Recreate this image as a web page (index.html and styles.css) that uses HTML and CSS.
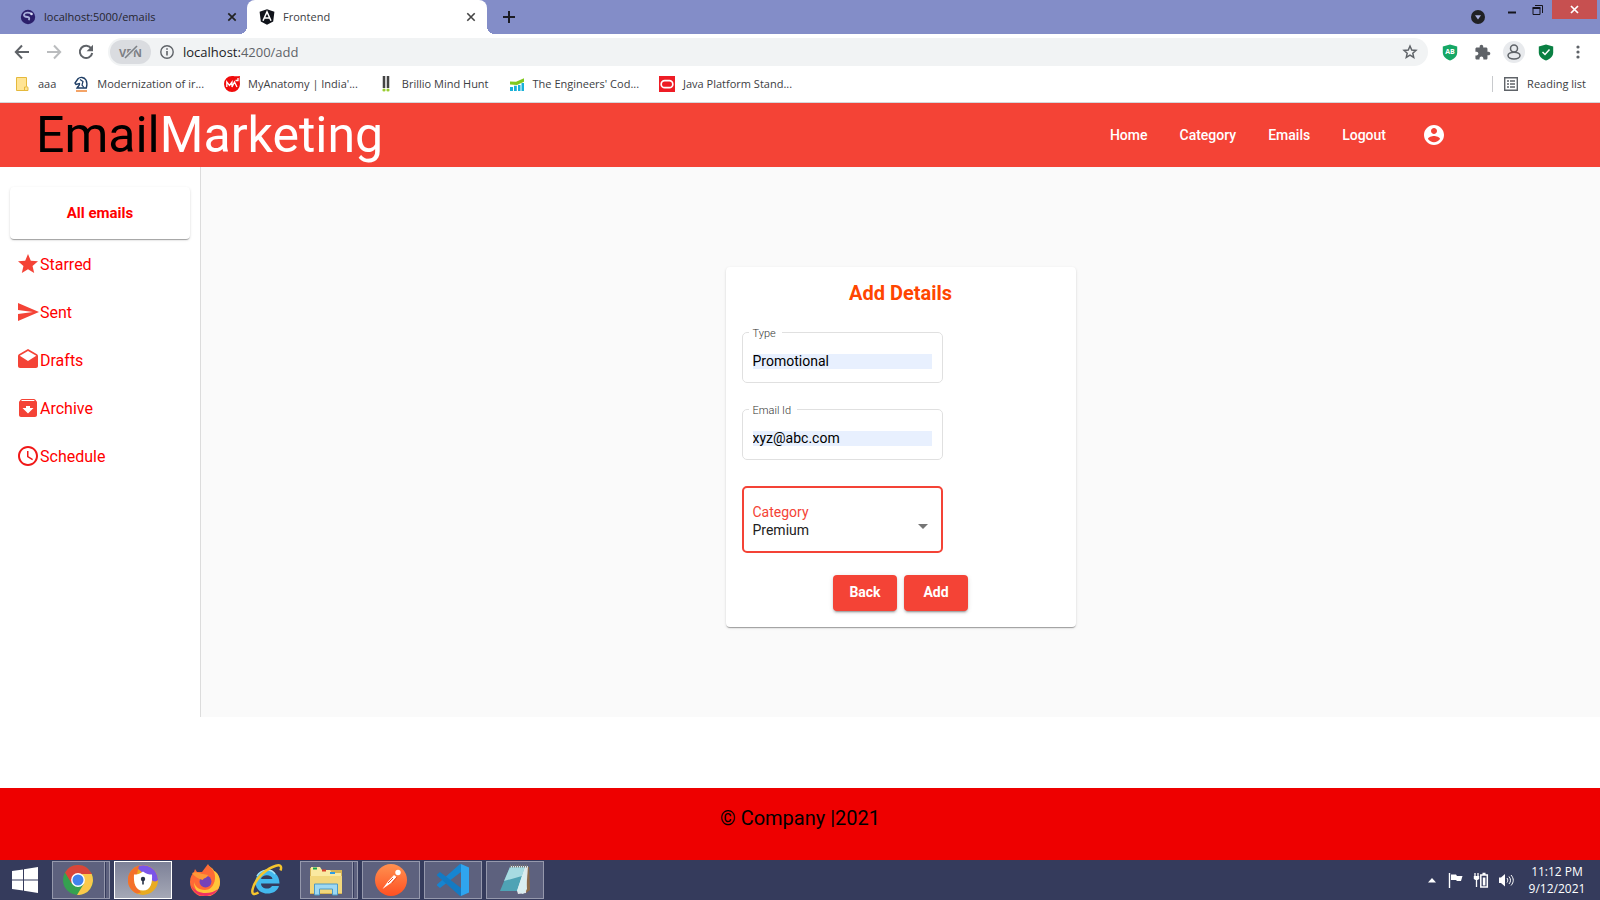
FILE: index.html
```html
<!DOCTYPE html>
<html lang="en">
<head>
<meta charset="utf-8">
<title>Frontend</title>
<link rel="stylesheet" href="styles.css">
</head>
<body>
<div class="tabs">
  <div class="tab">
    <svg class="fav" viewBox="0 0 16 16"><circle cx="8" cy="8" r="7.200" fill="#2b1f6b"/><path d="M11.500 4.500C9 3.500 5 3 4 5.500c-.5 2 1.500 2.300 3.500 2.500 1.800.3 2.500 1.500 1 3" fill="none" stroke="#a9b0dc" stroke-width="1.800"/><circle cx="11.500" cy="5" r="1.300" fill="#d8dcf3"/></svg>
    <span class="tab-title">localhost:5000/emails</span>
    <button class="icon-btn" aria-label="Close tab"><svg width="10" height="10" viewBox="0 0 10 10"><path d="M1.300 1.300l7.400 7.400M8.700 1.300L1.300 8.700" stroke="#222" stroke-width="1.700"/></svg></button>
  </div>
  <div class="tab tab-active">
    <svg class="fav" viewBox="0 0 16 16"><path d="M8 .2l7.400 2.600-1.200 9.600L8 15.800l-6.200-3.400L.6 2.800z" fill="#10131a"/><path d="M4 11.700L8 2.900l4 8.800M5.600 9h4.800" fill="none" stroke="#fff" stroke-width="1.500"/></svg>
    <span class="tab-title">Frontend</span>
    <button class="icon-btn" aria-label="Close tab"><svg width="10" height="10" viewBox="0 0 10 10"><path d="M1.300 1.300l7.400 7.400M8.700 1.300L1.300 8.700" stroke="#444" stroke-width="1.600"/></svg></button>
  </div>
  <button class="icon-btn new-tab" aria-label="New tab"><svg width="14" height="14" viewBox="0 0 14 14"><path d="M7 1v12M1 7h12" stroke="#1c1c24" stroke-width="2"/></svg></button>
  <div class="window-controls">
    <button class="icon-btn tab-search" aria-label="Search tabs"><svg width="14" height="14" viewBox="0 0 14 14"><circle cx="7" cy="7" r="7" fill="#202124"/><path d="M4 5.200h6L7 9.600z" fill="#a9b1df"/></svg></button>
    <button class="icon-btn win" aria-label="Minimize"><svg width="10" height="10" viewBox="0 0 10 10"><path d="M1 7.500h8" stroke="#15151d" stroke-width="2"/></svg></button>
    <button class="icon-btn win" aria-label="Restore"><svg width="12" height="12" viewBox="0 0 12 12"><path d="M1 4.500h7v6H1z M3 1.500h7.500V9" fill="none" stroke="#15151d"/><path d="M.5 4h8" stroke="#15151d" stroke-width="2"/></svg></button>
    <button class="icon-btn win-close" aria-label="Close"><svg width="9" height="9" viewBox="0 0 9 9"><path d="M1 1l7 7M8 1L1 8" stroke="#fff" stroke-width="1.700"/></svg></button>
  </div>
</div>

<div class="toolbar">
  <button class="icon-btn tool" aria-label="Back"><svg width="16" height="16" viewBox="0 0 16 16"><path d="M15 8H2M8 1.500L1.800 8 8 14.500" fill="none" stroke="#5f6368" stroke-width="2"/></svg></button>
  <button class="icon-btn tool" aria-label="Forward"><svg width="16" height="16" viewBox="0 0 16 16"><path d="M1 8h13M8 1.500L14.200 8 8 14.500" fill="none" stroke="#babcbe" stroke-width="2"/></svg></button>
  <button class="icon-btn tool" aria-label="Reload"><svg width="16" height="16" viewBox="0 0 16 16"><path d="M13.300 4.500A6.200 6.200 0 1 0 14.200 9" fill="none" stroke="#5f6368" stroke-width="2"/><path d="M15 .8v6.400H8.600z" fill="#5f6368"/></svg></button>
  <div class="omnibox">
    <button class="vpn" aria-label="VPN off"><span>VPN</span><svg width="24" height="14" viewBox="0 0 24 14"><path d="M7 13L19 1" stroke="#dadce0" stroke-width="3.500"/><path d="M7 13L19 1" stroke="#7d8085" stroke-width="1.600"/></svg></button>
    <svg class="info" width="14" height="14" viewBox="0 0 14 14"><circle cx="7" cy="7" r="6.200" fill="none" stroke="#5f6368" stroke-width="1.400"/><path d="M7 6v4.500M7 3.300v1.500" stroke="#5f6368" stroke-width="1.600"/></svg>
    <span class="url">localhost:<span class="url-path">4200/add</span></span>
    <button class="icon-btn bookmark-star" aria-label="Bookmark this page"><svg width="16" height="16" viewBox="0 0 24 24"><path d="M12 3l2.600 6 6.400.6-4.800 4.200 1.400 6.400L12 16.800l-5.600 3.400 1.400-6.400L3 9.600 9.400 9z" fill="none" stroke="#5f6368" stroke-width="2.200"/></svg></button>
  </div>
  <div class="extensions">
    <button class="icon-btn" aria-label="Ad blocker"><svg width="16" height="17" viewBox="0 0 16 17"><path d="M8 .4l7.200 2v6c0 4-3.500 6.600-7.200 8.200C4.300 15 .8 12.400.8 8.400v-6z" fill="#16a765"/><text x="8" y="10" text-anchor="middle" class="ab">AB</text></svg></button>
    <button class="icon-btn" aria-label="Extensions"><svg width="17" height="17" viewBox="0 0 24 24"><path fill="#5f6368" d="M20.500 11H19V7c0-1.100-.9-2-2-2h-4V3.500C13 2.120 11.880 1 10.500 1S8 2.120 8 3.500V5H4c-1.100 0-1.990.9-1.990 2v3.800H3.500c1.490 0 2.700 1.210 2.700 2.700s-1.210 2.700-2.700 2.700H2V20c0 1.100.9 2 2 2h3.800v-1.500c0-1.490 1.210-2.700 2.700-2.700s2.700 1.210 2.700 2.700V22H17c1.100 0 2-.9 2-2v-4h1.500c1.380 0 2.500-1.120 2.500-2.500S21.880 11 20.500 11z"/></svg></button>
    <button class="icon-btn profile" aria-label="Profile"><svg width="16" height="16" viewBox="0 0 16 16"><circle cx="8" cy="4.600" r="3.500" fill="none" stroke="#5f6368" stroke-width="1.500"/><ellipse cx="8" cy="11.600" rx="6" ry="3.400" fill="none" stroke="#5f6368" stroke-width="1.500"/></svg></button>
    <button class="icon-btn" aria-label="Security"><svg width="16" height="17" viewBox="0 0 16 17"><path d="M8 .4l7.200 2v6c0 4-3.500 6.600-7.200 8.200C4.300 15 .8 12.400.8 8.400v-6z" fill="#0a8043"/><path d="M4.500 8l2.500 2.500 4.500-5" fill="none" stroke="#fff" stroke-width="1.500"/></svg></button>
    <button class="icon-btn" aria-label="Menu"><svg width="4" height="14" viewBox="0 0 4 14" fill="#5f6368"><circle cx="2" cy="2" r="1.600"/><circle cx="2" cy="7" r="1.600"/><circle cx="2" cy="12" r="1.600"/></svg></button>
  </div>
</div>

<div class="bookmarks">
  <a href="#"><svg class="fav" viewBox="0 0 16 16"><path d="M2.500 1.500h10v9l1.500.8v3.200h-11.500z" fill="#ffe494" stroke="#e5b93c"/><path d="M10.500 14v-3h2" fill="none" stroke="#e5b93c"/></svg>aaa</a>
  <a href="#"><svg class="fav" viewBox="0 0 16 16"><path d="M4 12c1-2 3-2.500 2.500-4.500L3 8.500 2 7l3-4.200C7 .8 11 .8 13 4c1.200 2.500 1 5.500.3 8z" fill="none" stroke="#1d3c64" stroke-width="1.400"/><path d="M7 3.500l3 2-1 3.500 2 2.500" fill="none" stroke="#1d3c64" stroke-width="1.200"/><path d="M3 15h11" stroke="#ef7d26" stroke-width="1.400"/></svg>Modernization of ir...</a>
  <a href="#"><svg class="fav" viewBox="0 0 16 16"><path d="M8 0c3 0 3.500.6 8 0-.6 4 0 5 0 8a8 8 0 1 1-8-8z" fill="#f00b0b"/><path d="M2.800 11V6l2.700 3.500L8 6v5l2.500-5 2.500 5M11.500 4.500h3M14 2v3" fill="none" stroke="#fff" stroke-width="1.300"/></svg>MyAnatomy | India'...</a>
  <a href="#"><svg class="fav" viewBox="0 0 16 16"><path d="M4.500 0h3v12h-3zM8.500 0h3v12h-3z" fill="#9b9b9b"/><path d="M5 0h2v12H5zM9 0h2v12H9z" fill="#444"/><circle cx="6" cy="14" r="1.600" fill="#9acd32"/><circle cx="10" cy="14" r="1.600" fill="#9acd32"/></svg>Brillio Mind Hunt</a>
  <a href="#"><svg class="fav" viewBox="0 0 16 16"><path d="M1 5.500l6 .2 8-3.500v3.500L8 9l-7-.5z" fill="#80c91e"/><path d="M1 11h3v4H1zM5 9.800h2.800V15H5zM9 9h2.500v6H9zM12.500 7H15v8h-2.500z" fill="#18b1d8"/></svg>The Engineers' Cod...</a>
  <a href="#"><svg class="fav" viewBox="0 0 16 16"><path d="M0 0h16v16H0z" fill="#ee1c25"/><rect x="2.200" y="4.700" width="11.600" height="7" rx="3.500" fill="none" stroke="#fff" stroke-width="1.700"/></svg>Java Platform Stand...</a>
  <button class="reading"><svg class="fav" viewBox="0 0 16 16"><path d="M1.700 1.700h12.600v12.600H1.700z" fill="none" stroke="#5f6368" stroke-width="1.400"/><path d="M4 5h2M7 5h5M4 8h2M7 8h5M4 11h2M7 11h5" stroke="#5f6368" stroke-width="1.500"/></svg>Reading list</button>
</div>

<header class="header">
  <h1 class="brand"><span class="brand-first">Email</span>Marketing</h1>
  <nav class="nav">
    <a href="#">Home</a><a href="#">Category</a><a href="#">Emails</a><a href="#">Logout</a>
    <button class="icon-btn account" aria-label="Account"><svg width="24" height="24" viewBox="0 0 24 24" fill="#fff"><path d="M12 2C6.480 2 2 6.480 2 12s4.480 10 10 10 10-4.480 10-10S17.520 2 12 2zm0 3c1.660 0 3 1.340 3 3s-1.340 3-3 3-3-1.340-3-3 1.340-3 3-3zm0 14.200c-2.500 0-4.710-1.280-6-3.220.03-1.990 4-3.080 6-3.080 1.990 0 5.970 1.090 6 3.080-1.290 1.940-3.500 3.220-6 3.220z"/></svg></button>
  </nav>
</header>

<div class="layout">
  <aside class="sidebar">
    <button class="all-emails">All emails</button>
    <a class="side-link" href="#"><svg viewBox="0 0 24 24"><path d="M12 17.270L18.180 21l-1.640-7.030L22 9.240l-7.190-.61L12 2 9.190 8.630 2 9.240l5.460 4.730L5.820 21z"/></svg>Starred</a>
    <a class="side-link" href="#"><svg viewBox="0 0 24 24"><path d="M2.010 21L23 12 2.010 3 2 10l15 2-15 2z"/></svg>Sent</a>
    <a class="side-link" href="#"><svg viewBox="0 0 24 24"><path d="M21.990 8c0-.72-.37-1.350-.94-1.700L12 1 2.950 6.300C2.380 6.650 2 7.280 2 8v10c0 1.100.9 2 2 2h16c1.100 0 2-.9 2-2l-.01-10zM12 13L3.740 7.840 12 3l8.260 4.840L12 13z"/></svg>Drafts</a>
    <a class="side-link" href="#"><svg viewBox="0 0 24 24"><path d="M20.540 5.230l-1.390-1.680C18.880 3.210 18.470 3 18 3H6c-.47 0-.88.21-1.160.55L3.460 5.230C3.170 5.570 3 6.020 3 6.500V19c0 1.100.9 2 2 2h14c1.100 0 2-.9 2-2V6.500c0-.48-.17-.93-.46-1.270zM12 17.500L6.500 12H10v-2h4v2h3.500L12 17.500zM5.120 5l.81-1h12l.94 1H5.120z"/></svg>Archive</a>
    <a class="side-link schedule" href="#"><svg viewBox="0 0 24 24"><path d="M11.990 2C6.470 2 2 6.480 2 12s4.470 10 9.990 10C17.520 22 22 17.520 22 12S17.520 2 11.990 2zM12 20c-4.420 0-8-3.580-8-8s3.580-8 8-8 8 3.580 8 8-3.580 8-8 8zM12.500 7H11v6l5.250 3.150.75-1.230-4.500-2.670z"/></svg>Schedule</a>
  </aside>
  <main class="content">
    <form class="card">
      <h2 class="card-title">Add Details</h2>
      <fieldset class="field">
        <legend><label for="type">Type</label></legend>
        <input id="type" type="text" value="Promotional">
      </fieldset>
      <fieldset class="field">
        <legend><label for="email">Email Id</label></legend>
        <input id="email" type="text" value="xyz@abc.com">
      </fieldset>
      <div class="select-field">
        <label for="category">Category</label>
        <select id="category"><option>Premium</option></select>
        <svg class="caret" width="10" height="5" viewBox="0 0 10 5"><path d="M0 0h10L5 5z" fill="#757575"/></svg>
      </div>
      <div class="actions">
        <button type="button">Back</button>
        <button type="button">Add</button>
      </div>
    </form>
  </main>
</div>

<footer class="footer">© Company |2021</footer>

<div class="taskbar">
  <button class="start" aria-label="Start"><svg width="26" height="26" viewBox="0 0 26 26" fill="#fff"><path d="M0 4l11-1.600v10.200H0zM12 2.200L26 0v12.600H12zM0 13.600h11v10L0 22zM12 13.600h14V26l-14-2.200z"/></svg></button>
  <button class="task open stacked" aria-label="Chrome"><svg width="30" height="30" viewBox="0 0 30 30"><circle cx="15" cy="15" r="15" fill="#35a150"/><path d="M2 7.500A15 15 0 0 1 28 7.500L29 9H15l-6.500 9.200z" fill="#d9453a"/><path d="M28.700 9A15 15 0 0 1 14 30l7-11.500L19 9z" fill="#fbc94c"/><circle cx="15" cy="15" r="6.900" fill="#fff"/><circle cx="15" cy="15" r="5.500" fill="#4083ee"/></svg></button>
  <button class="task open current" aria-label="Secure Browser"><svg width="30" height="30" viewBox="0 0 30 30"><circle cx="15" cy="15" r="15" fill="#e8ab22"/><path d="M8 2A15 15 0 0 1 30 15c-1 1-3 2-5 1L15 8z" fill="#7b55e8"/><path d="M11 .6C-3 5-4 23 9 28.600l4-1L6 18l3-9z" fill="#f4702b"/><path d="M15 6.500c3 2.500 6 3 9 3 .5 8-1 16-9 16s-9.500-8-9-16c3 0 6-.5 9-3z" fill="#fff"/><circle cx="15" cy="14" r="2.200" fill="#293246"/><path d="M14.200 14h1.600v5.500h-1.600z" fill="#293246"/></svg></button>
  <button class="task" aria-label="Firefox"><svg width="32" height="32" viewBox="0 0 32 32"><path d="M19 0c1 3 5 4 6 7 3 1 6 6 6 11a15 15 0 0 1-30 0c0-5 2-8 4-10l1-3 2 3h5c2-3 4-5 6-8z" fill="#ff6a35"/><path d="M19 0c1 4 8 5 7 15-1 8-6 11-10 11-7 0-10-4-11-8 0 8 6 14 12 14 8 0 14-6 14-14 0-5-3-10-6-11-1-3-5-4-6-7z" fill="#ffc53a"/><path d="M2 21c2 8 9 11 14 11 6 0 10-2 13-7-6 5-21 7-27-4z" fill="#ef3262"/><circle cx="16.500" cy="17.500" r="6" fill="#7442b8"/><path d="M3 9c5-2 8 1 11 1l5 1c0 3-5 3-5 5-5-1-9-4-11-7z" fill="#ff9837"/></svg></button>
  <button class="task" aria-label="Internet Explorer"><svg width="32" height="32" viewBox="0 0 32 32"><path d="M28.500 19.500H10c.2 6 9 6.500 11 2.500h7C25 33 4 32.500 4.500 17.500 5 3 28.500 2 28.500 19.500zM10 15h11.500c-.7-5-10.500-5-11.500 0z" fill="#43b9ee"/><path d="M6 12c4-7 14-8 18-2" fill="none" stroke="#a5e7fb" stroke-width="1.500"/><path d="M7.500 28.500C-3 35 1 20 11 10 20 2 33-3 29.500 6.500" fill="none" stroke="#f5c52e" stroke-width="2.500"/></svg></button>
  <button class="task open stacked" aria-label="File Explorer"><svg width="34" height="32" viewBox="0 0 34 32"><path d="M1 4h10v2h22v24H1z" fill="#d7b454"/><path d="M2 3h9l2 3h8l2 3h9v20H2z" fill="#fae9a1"/><path d="M1 12h32v17H1z" fill="#f2d77c"/><path d="M4 3.500h4v2H4z" fill="#17a34a"/><path d="M13 5.500h4v2h-4z" fill="#d6422c"/><path d="M21 8h5v2h-5z" fill="#2d9de5"/><path d="M5.500 31V20h23v11h-5v-6h-13v6z" fill="#9ed9f3" stroke="#4d9ac6"/></svg></button>
  <button class="task open" aria-label="Postman"><svg width="32" height="32" viewBox="0 0 32 32"><defs><linearGradient id="pm" x2="0" y2="1"><stop stop-color="#ff9150"/><stop offset="1" stop-color="#ff5022"/></linearGradient></defs><circle cx="16" cy="16" r="16" fill="url(#pm)"/><circle cx="23" cy="8.500" r="2.700" fill="#fff"/><path d="M19 11l2.500 2-5.500 6-8.500 6 5.500-7.500z" fill="#fff"/><path d="M18 14l-5 5M22 13l-5 6" stroke="#e84e24"/></svg></button>
  <button class="task open" aria-label="Visual Studio Code"><svg width="32" height="32" viewBox="0 0 32 32"><path d="M24 8L3 24l-3-2.500v-1L23 0h1z" fill="#1685d1"/><path d="M24 24L3 8 0 10.500v1L23 32h1z" fill="#137ac3"/><path d="M24 0l8 3.500v25L24 32z" fill="#2fa5ee"/></svg></button>
  <button class="task open" aria-label="Notepad"><svg width="32" height="32" viewBox="0 0 32 32"><path d="M27 3h3l1 23-4 3z" fill="#8c6b49"/><path d="M11 2h18l-2 27-8 1z" fill="#e2e7e8"/><path d="M11 3h15l-8 24H1z" fill="#4fa3b5"/><path d="M11 3h15l-3 9-18 5z" fill="#a8dbe2"/><path d="M18 27l8-24 2 22-4 5z" fill="#d9eef0"/><path d="M11 2h17" stroke="#777" stroke-width="3" stroke-dasharray="1 1"/></svg></button>
  <div class="tray">
    <svg class="tray-more" width="8" height="5" viewBox="0 0 8 5"><path d="M4 0l4 4.500H0z" fill="#fff"/></svg>
    <svg width="16" height="16" viewBox="0 0 16 16"><path d="M1.500 1v15" stroke="#fff" stroke-width="1.400"/><path d="M3 2.500h5l1 1.500h5.500L13 9H9L8 8H3z" fill="#fff"/></svg>
    <svg width="16" height="16" viewBox="0 0 16 16"><path d="M7.800 3h6.500v12H7.800zM9.500 1.500h3" fill="none" stroke="#fff" stroke-width="1.500"/><path d="M9.800 5.500h2.600v8H9.800z" fill="#fff"/><path d="M2 1v3M5 1v3M3.500 7v8" stroke="#fff" stroke-width="1.300"/><path d="M.8 4h5.400v3L4.500 8h-2L.8 7z" fill="#fff"/></svg>
    <svg width="16" height="16" viewBox="0 0 16 16"><path d="M1 5.500h2L7 2v12.500L3 11H1z" fill="#fff"/><path d="M9 6c1 1.500 1 3 0 4.500M11 4.500c2 2.500 2 5 0 7.500M13 3c3 3.500 3 7 0 10.500" fill="none" stroke="#fff"/></svg>
    <div class="clock"><span>11:12 PM</span><span>9/12/2021</span></div>
  </div>
</div>
</body>
</html>
```
FILE: styles.css
```css
* { box-sizing: border-box; }
body {
  margin: 0;
  min-height: 100vh;
  display: flex;
  flex-direction: column;
  background: #fff;
  font-family: Roboto, "Liberation Sans", sans-serif;
  color: #212121;
}
a { color: inherit; text-decoration: none; }
button, input, select { font: inherit; color: inherit; }
button { border: 0; background: none; padding: 0; }
svg { flex: none; display: block; }
.icon-btn { display: flex; align-items: center; justify-content: center; }
.fav { width: 16px; height: 16px; }

/* browser frame */
.tabs, .toolbar, .bookmarks, .taskbar { font-family: "Open Sans", "Noto Sans", sans-serif; }
.tabs {
  display: flex;
  height: 34px;
  background: #838dc8;
  font-size: 11px;
}
.tab {
  display: flex;
  align-items: center;
  gap: 8px;
  width: 247px;
  padding: 0 10px 0 20px;
  color: #26262e;
}
.tab-active {
  position: relative;
  width: 240px;
  padding: 0 11px 0 12px;
  background: #fff;
  border-radius: 8px 8px 0 0;
  color: #3c4043;
}
.tab-active::before, .tab-active::after {
  content: "";
  position: absolute;
  bottom: 0;
  width: 8px;
  height: 8px;
}
.tab-active::before { right: 100%; background: radial-gradient(circle at 0 0, transparent 8px, #fff 8px); }
.tab-active::after { left: 100%; background: radial-gradient(circle at 100% 0, transparent 8px, #fff 8px); }
.tab-title { flex: 1; padding-bottom: 2px; white-space: nowrap; }
.new-tab { width: 44px; }
.window-controls { display: flex; margin-left: auto; padding-right: 3px; }
.tab-search { width: 43px; }
.win { width: 26px; height: 19px; }
.win-close { width: 45px; height: 19px; margin-left: 1px; background: #c75050; }

.toolbar {
  display: flex;
  align-items: center;
  height: 34px;
  padding: 2px 11px 0 6px;
}
.tool { width: 32px; }
.omnibox {
  flex: 1;
  display: flex;
  align-items: center;
  height: 28px;
  margin-left: 6px;
  padding: 0 10px 0 2px;
  border-radius: 14px;
  background: #f1f3f4;
  font-size: 13px;
}
.vpn {
  position: relative;
  width: 41px;
  height: 24px;
  border-radius: 12px;
  background: #dadce0;
  color: #7d8085;
  font-size: 11px;
  font-weight: 700;
}
.vpn svg { position: absolute; left: 8px; top: 5px; }
.info { margin: 0 9px; }
.url { flex: 1; color: #202124; }
.url-path { color: #5f6368; }
.extensions { display: flex; align-items: center; gap: 10px; margin-left: 11px; }
.extensions .icon-btn { width: 22px; height: 22px; }
.extensions .profile { border-radius: 50%; background: #e8eaed; }
.ab { fill: #fff; font-size: 7px; font-weight: 700; }

.bookmarks {
  display: flex;
  align-items: center;
  gap: 17px;
  height: 35px;
  padding: 0 14px 3px;
  border-bottom: 1px solid #d5d7db;
  font-size: 11px;
  color: #3c4043;
  white-space: nowrap;
}
.bookmarks a, .reading { display: flex; align-items: center; gap: 8px; }
.bookmarks a + a { margin-right: 3px; }
.reading { margin-left: auto; padding-left: 10px; border-left: 1px solid #c8cacd; }

/* page */
.header {
  display: flex;
  align-items: center;
  justify-content: space-between;
  height: 64px;
  padding: 0 154px 0 36px;
  background: #f44336;
  color: #fff;
}
.brand { margin: 0; font-size: 50px; line-height: 64px; font-weight: 400; }
.brand-first { color: #000; }
.nav { display: flex; align-items: center; gap: 32px; font-size: 14px; font-weight: 500; }
.account { margin-left: 4px; }

.layout { flex: 1; display: flex; margin-bottom: 71px; }
.sidebar {
  width: 201px;
  padding-top: 20px;
  border-right: 1px solid #dcdcdc;
  background: #fff;
  color: #f00;
}
.all-emails {
  display: block;
  width: 180px;
  height: 52px;
  margin: 0 10px 1px;
  border-radius: 4px;
  background: #fff;
  box-shadow: 0 2px 1px -1px rgba(0,0,0,.2), 0 1px 1px 0 rgba(0,0,0,.14), 0 1px 3px 0 rgba(0,0,0,.12);
  font-size: 15px;
  font-weight: 700;
}
.side-link {
  display: flex;
  align-items: center;
  height: 48px;
  padding-left: 16px;
  font-size: 16px;
}
.side-link svg { width: 24px; height: 24px; fill: #f44336; }
.schedule svg { fill: #f01818; }

.content {
  flex: 1;
  display: flex;
  justify-content: center;
  align-items: flex-start;
  padding: 100px 16px 24px;
  background: #fafafa;
}
.card {
  width: 350px;
  padding: 16px;
  border-radius: 4px;
  background: #fff;
  box-shadow: 0 2px 1px -1px rgba(0,0,0,.2), 0 1px 1px 0 rgba(0,0,0,.14), 0 1px 3px 0 rgba(0,0,0,.12);
  font-size: 14px;
}
.card-title {
  margin: 0 0 21px;
  font-size: 20px;
  line-height: 20px;
  font-weight: 700;
  text-align: center;
  color: #ff4500;
}
.field {
  width: 201px;
  margin: 0 0 18px;
  padding: 14px 10px 13px;
  border: 1px solid #e0e0e0;
  border-radius: 5px;
}
.field legend {
  margin-left: -4px;
  padding: 4px 6px 0 4px;
  font-size: 11px;
  line-height: 12px;
  font-weight: 300;
  color: #333;
}
.field input {
  display: block;
  width: 100%;
  height: 15px;
  padding: 0;
  border: 0;
  background: #e8f0fe;
  color: #000;
  line-height: 15px;
}
.select-field {
  position: relative;
  width: 201px;
  margin-top: 26px;
  padding: 15px 9px 12px;
  border: 2px solid #f44336;
  border-radius: 5px;
  line-height: 18px;
}
.select-field label { display: block; color: #f44336; }
.select-field select {
  display: block;
  appearance: none;
  width: 100%;
  height: 18px;
  padding: 0;
  border: 0;
  background: none;
}
.caret { position: absolute; right: 13px; top: 36px; pointer-events: none; }
.actions { display: flex; justify-content: center; gap: 7px; margin-top: 22px; }
.actions button {
  width: 64px;
  height: 36px;
  padding-bottom: 2px;
  border-radius: 4px;
  background: #f44336;
  box-shadow: 0 3px 1px -2px rgba(0,0,0,.2), 0 2px 2px 0 rgba(0,0,0,.14), 0 1px 5px 0 rgba(0,0,0,.12);
  color: #fff;
  font-weight: 700;
}

.footer {
  height: 72px;
  padding-top: 18px;
  background: #ee0000;
  color: #000;
  font-size: 20px;
  line-height: 24px;
  text-align: center;
}

/* taskbar */
.taskbar {
  display: flex;
  gap: 4px;
  height: 40px;
  padding: 1px 0;
  background: #353b5c;
}
.start { width: 48px; padding-left: 12px; display: flex; align-items: center; }
.task {
  display: flex;
  align-items: center;
  justify-content: center;
  width: 58px;
}
.open { border: 1px solid #9598ac; background: #5d617e; }
.current { border-color: #fff; background: linear-gradient(#7d8198, #a5a8b6); }
.stacked { padding-right: 6px; background: linear-gradient(90deg, transparent 51px, #9598ac 51px, #9598ac 52px, #353b5c 52px, #353b5c 53px, transparent 53px), #5d617e; }
.tray { display: flex; align-items: center; gap: 9px; margin-left: auto; color: #fff; }
.tray-more { margin-right: 3px; }
.clock {
  display: flex;
  flex-direction: column;
  width: 68px;
  margin-right: 9px;
  text-align: center;
  font-size: 12px;
  line-height: 17px;
}
```
